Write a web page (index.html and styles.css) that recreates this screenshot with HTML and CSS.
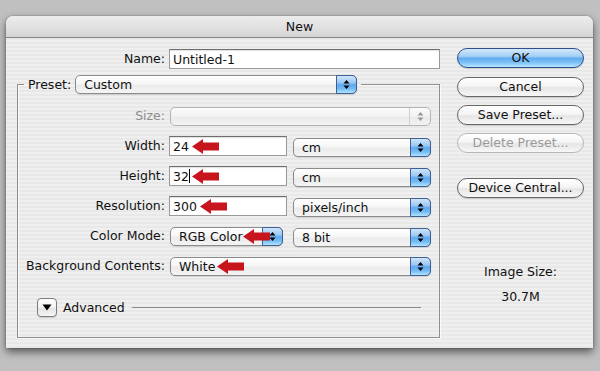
FILE: index.html
```html
<!DOCTYPE html>
<html>
<head>
<meta charset="utf-8">
<title>New</title>
<link rel="stylesheet" href="styles.css">
</head>
<body>
<div class="dialog">
  <div class="titlebar">New</div>
  <div class="content">
    <div class="main">
      <div class="name-row">
        <span class="lbl">Name:</span>
        <div class="field">Untitled-1</div>
      </div>
      <fieldset class="group">
        <legend class="preset">
          <span class="preset-lbl">Preset:</span>
          <div class="popup popup-preset"><span class="val">Custom</span><span class="cap"><svg width="7" height="11" viewBox="0 0 7 11"><path d="M3.5 1 L6.5 4.5 L0.5 4.5 Z M0.5 6.5 L6.5 6.5 L3.5 10 Z" fill="#000"/></svg></span></div>
        </legend>
        <div class="grid">
          <span class="lbl dim">Size:</span>
          <div class="popup wide disabled"><span class="val"></span><span class="cap"><svg width="7" height="11" viewBox="0 0 7 11"><path d="M3.5 1 L6.5 4.5 L0.5 4.5 Z M0.5 6.5 L6.5 6.5 L3.5 10 Z" fill="#9a9a9a"/></svg></span></div>

          <span class="lbl">Width:</span>
          <div class="field">24<svg class="arrow arrow-width" width="27" height="15" viewBox="0 0 27 15"><path d="M0 7.5 L11 0 L11 3.5 L27 3.5 L27 11.5 L11 11.5 L11 15 Z"/></svg></div>
          <div class="popup unit"><span class="val">cm</span><span class="cap"><svg width="7" height="11" viewBox="0 0 7 11"><path d="M3.5 1 L6.5 4.5 L0.5 4.5 Z M0.5 6.5 L6.5 6.5 L3.5 10 Z" fill="#000"/></svg></span></div>

          <span class="lbl">Height:</span>
          <div class="field">32<span class="caret"></span><svg class="arrow arrow-height" width="27" height="15" viewBox="0 0 27 15"><path d="M0 7.5 L11 0 L11 3.5 L27 3.5 L27 11.5 L11 11.5 L11 15 Z"/></svg></div>
          <div class="popup unit"><span class="val">cm</span><span class="cap"><svg width="7" height="11" viewBox="0 0 7 11"><path d="M3.5 1 L6.5 4.5 L0.5 4.5 Z M0.5 6.5 L6.5 6.5 L3.5 10 Z" fill="#000"/></svg></span></div>

          <span class="lbl">Resolution:</span>
          <div class="field">300<svg class="arrow arrow-res" width="27" height="15" viewBox="0 0 27 15"><path d="M0 7.5 L11 0 L11 3.5 L27 3.5 L27 11.5 L11 11.5 L11 15 Z"/></svg></div>
          <div class="popup unit"><span class="val">pixels/inch</span><span class="cap"><svg width="7" height="11" viewBox="0 0 7 11"><path d="M3.5 1 L6.5 4.5 L0.5 4.5 Z M0.5 6.5 L6.5 6.5 L3.5 10 Z" fill="#000"/></svg></span></div>

          <span class="lbl">Color Mode:</span>
          <div class="popup mode"><span class="val">RGB Color</span><span class="cap"><svg width="7" height="11" viewBox="0 0 7 11"><path d="M3.5 1 L6.5 4.5 L0.5 4.5 Z M0.5 6.5 L6.5 6.5 L3.5 10 Z" fill="#000"/></svg></span><svg class="arrow arrow-mode" width="27" height="15" viewBox="0 0 27 15"><path d="M0 7.5 L11 0 L11 3.5 L27 3.5 L27 11.5 L11 11.5 L11 15 Z"/></svg></div>
          <div class="popup unit"><span class="val">8 bit</span><span class="cap"><svg width="7" height="11" viewBox="0 0 7 11"><path d="M3.5 1 L6.5 4.5 L0.5 4.5 Z M0.5 6.5 L6.5 6.5 L3.5 10 Z" fill="#000"/></svg></span></div>

          <span class="lbl">Background Contents:</span>
          <div class="popup wide"><span class="val">White</span><span class="cap"><svg width="7" height="11" viewBox="0 0 7 11"><path d="M3.5 1 L6.5 4.5 L0.5 4.5 Z M0.5 6.5 L6.5 6.5 L3.5 10 Z" fill="#000"/></svg></span><svg class="arrow arrow-bg" width="27" height="15" viewBox="0 0 27 15"><path d="M0 7.5 L11 0 L11 3.5 L27 3.5 L27 11.5 L11 11.5 L11 15 Z"/></svg></div>
        </div>
        <div class="advanced">
          <span class="disclosure"><svg width="10" height="7" viewBox="0 0 10 7"><path d="M0.5 0.5 L9.5 0.5 L5 6.5 Z" fill="#000"/></svg></span>
          <span class="adv-text">Advanced</span>
          <span class="adv-line"></span>
        </div>
      </fieldset>
    </div>
    <div class="side">
      <div class="btn btn-default">OK</div>
      <div class="btn btn-cancel">Cancel</div>
      <div class="btn">Save Preset...</div>
      <div class="btn btn-disabled">Delete Preset...</div>
      <div class="btn btn-device">Device Central...</div>
      <div class="imgsize">
        <div class="imgsize-label">Image Size:</div>
        <div class="imgsize-value">30.7M</div>
      </div>
    </div>
  </div>
</div>
</body>
</html>
```

FILE: styles.css
```css
* { box-sizing: border-box; }

html, body {
  margin: 0;
  padding: 0;
  background: #c0c0c0;
  width: 600px;
  height: 371px;
  overflow: hidden;
}

body {
  font-family: "DejaVu Sans", "Liberation Sans", sans-serif;
  font-size: 12.5px;
  color: #111;
}

.dialog {
  margin: 16px 0 0 6px;
  width: 587px;
  height: 332px;
  border-radius: 7px 7px 0 0;
  background: repeating-linear-gradient(to bottom, #efefef 0, #efefef 2px, #e8e8e8 2px, #e8e8e8 4px);
  box-shadow: 0 4px 8px rgba(0, 0, 0, 0.55), 0 0 2px rgba(0, 0, 0, 0.35);
  overflow: hidden;
}

.titlebar {
  height: 22px;
  line-height: 21px;
  text-align: center;
  font-size: 12.5px;
  background: linear-gradient(to bottom, #ececec 0%, #e2e2e2 50%, #d3d3d3 100%);
  border-bottom: 1px solid #868686;
  border-radius: 7px 7px 0 0;
}

.content {
  display: flex;
  padding: 0 9px 0 11px;
}

.main {
  width: 423px;
  padding-top: 11px;
}

.name-row {
  display: grid;
  grid-template-columns: 148px 271px;
  column-gap: 4px;
  align-items: center;
}

.lbl {
  text-align: right;
  white-space: nowrap;
  line-height: 20px;
}

.lbl.dim { color: #8d8d8d; }

.field {
  position: relative;
  height: 20px;
  line-height: 19px;
  padding-left: 3px;
  background: #fff;
  border: 1px solid #9a9a9a;
  border-top-color: #6e6e6e;
  box-shadow: inset 0 1px 1px rgba(0, 0, 0, 0.12);
  white-space: nowrap;
}

.caret {
  display: inline-block;
  width: 1px;
  height: 14px;
  background: #000;
  vertical-align: -2px;
}

.group {
  margin: 6px 0 0 0;
  padding: 12px 8px 20px 0;
  width: 423px;
  min-width: 0;
  border: 1px solid #8f8f8f;
  box-shadow: 1px 1px 0 #fafafa, inset 1px 1px 0 #fafafa;
}

.preset {
  margin-left: 6px;
  padding: 0 4px 0 4px;
  display: flex;
  align-items: center;
  height: 19px;
}

.preset-lbl {
  margin-right: 4px;
}

.popup-preset {
  width: 282px;
}

.grid {
  display: grid;
  grid-template-columns: 147px 118px 140px;
  grid-auto-rows: 20px;
  column-gap: 4px;
  row-gap: 10px;
  align-items: center;
}

.popup {
  position: relative;
  display: flex;
  height: 19px;
  border: 1px solid #8b8b8b;
  border-radius: 5px;
  background: linear-gradient(to bottom, #ffffff 0%, #f6f6f6 45%, #ebebeb 55%, #f4f4f4 100%);
  box-shadow: 0 1px 1px rgba(0, 0, 0, 0.12);
}

.popup .val {
  flex: 1;
  padding-left: 8px;
  line-height: 17px;
  white-space: nowrap;
}

.popup .cap {
  width: 21px;
  margin: -1px -1px -1px 0;
  display: flex;
  align-items: center;
  justify-content: center;
  border: 1px solid #3e5e96;
  border-radius: 0 5px 5px 0;
  background: linear-gradient(to bottom, #cfe5fb 0%, #99c8f4 40%, #5ea8ef 52%, #74bbf4 75%, #b2e3ff 100%);
}

.popup.disabled {
  border-color: #b4b4b4;
  background: linear-gradient(to bottom, #fbfbfb 0%, #f1f1f1 50%, #eaeaea 55%, #f2f2f2 100%);
  box-shadow: none;
}

.popup.disabled .cap {
  border: none;
  margin: 0;
  border-left: 1px solid #cfcfcf;
  background: transparent;
}

.popup.wide {
  grid-column: 2 / 4;
  margin-left: 1px;
}

.popup.unit {
  margin-left: 2px;
  margin-top: 2px;
}

.popup.mode {
  margin-left: 1px;
  width: 113px;
}

.arrow {
  position: absolute;
  top: 50%;
  margin-top: -7px;
  fill: #c8151d;
}

.arrow-width { left: 22px; }
.arrow-height { left: 22px; }
.arrow-res { left: 30px; }
.arrow-mode { left: 72px; }
.arrow-bg { left: 46px; }

.advanced {
  display: flex;
  align-items: center;
  margin-top: 22px;
  padding-left: 19px;
  padding-right: 10px;
  height: 19px;
}

.disclosure {
  width: 20px;
  height: 19px;
  display: flex;
  align-items: center;
  justify-content: center;
  border: 1px solid #7d7d7d;
  border-radius: 4px;
  background: linear-gradient(to bottom, #ffffff 0%, #f2f2f2 50%, #e3e3e3 55%, #f6f6f6 100%);
  box-shadow: 0 1px 1px rgba(0, 0, 0, 0.15);
}

.adv-text {
  margin-left: 6px;
}

.adv-line {
  flex: 1;
  height: 1px;
  margin-left: 7px;
  background: #8a8a8a;
}

.side {
  width: 127px;
  margin-left: 17px;
  padding-top: 10px;
  display: flex;
  flex-direction: column;
}

.btn {
  height: 20px;
  line-height: 18px;
  text-align: center;
  border: 1px solid #666;
  border-radius: 10px;
  background: linear-gradient(to bottom, #ffffff 0%, #f5f5f5 45%, #e6e6e6 55%, #f7f7f7 100%);
  box-shadow: 0 1px 1px rgba(0, 0, 0, 0.15);
  margin-top: 8px;
  white-space: nowrap;
}

.btn-default {
  margin-top: 0;
  border-color: #2d4f8a;
  background: linear-gradient(to bottom, #d4e8fc 0%, #a4cff6 40%, #62acf0 52%, #7cc2f6 75%, #b8e8ff 100%);
}

.btn-cancel { margin-top: 9px; }

.btn-disabled {
  color: #9a9a9a;
  border-color: #b7b7b7;
  box-shadow: none;
}

.btn-device { margin-top: 25px; }

.imgsize {
  margin-top: 66px;
  text-align: center;
  line-height: 16px;
}

.imgsize-value {
  margin-top: 9px;
}
```
